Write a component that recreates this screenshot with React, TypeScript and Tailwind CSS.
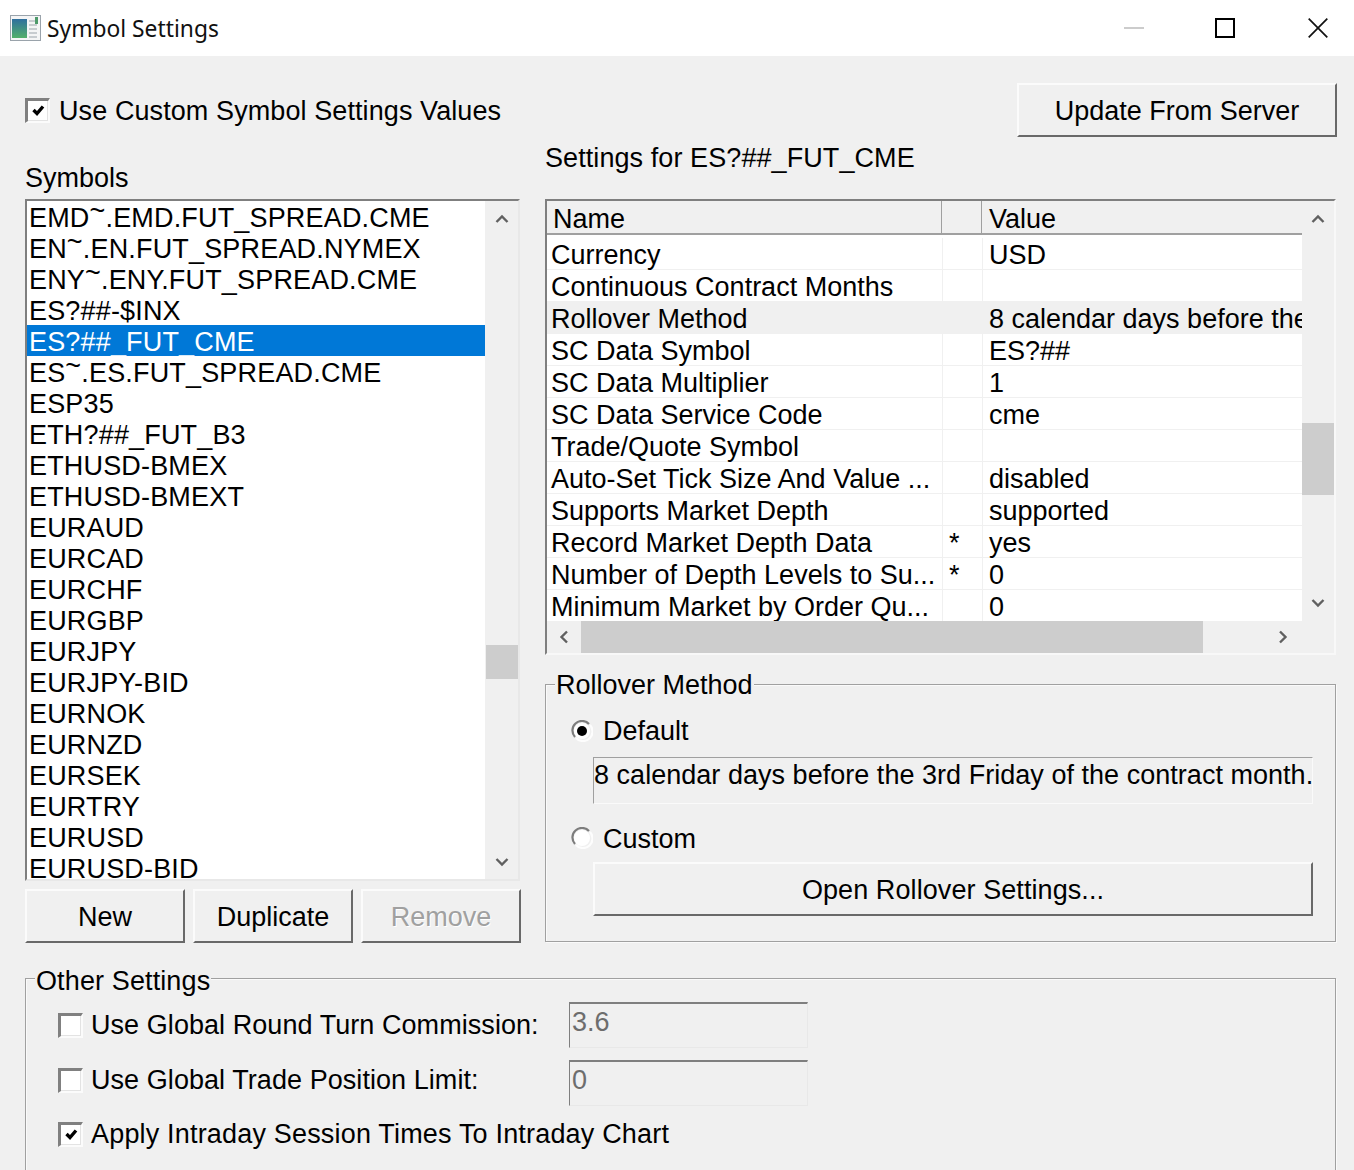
import React from "react";

const symbols = ["EMD~.EMD.FUT_SPREAD.CME","EN~.EN.FUT_SPREAD.NYMEX","ENY~.ENY.FUT_SPREAD.CME","ES?##-$INX","ES?##_FUT_CME","ES~.ES.FUT_SPREAD.CME","ESP35","ETH?##_FUT_B3","ETHUSD-BMEX","ETHUSD-BMEXT","EURAUD","EURCAD","EURCHF","EURGBP","EURJPY","EURJPY-BID","EURNOK","EURNZD","EURSEK","EURTRY","EURUSD","EURUSD-BID"];
const rows: [string, string, string][] = [
  ["Currency","","USD"],
  ["Continuous Contract Months","",""],
  ["Rollover Method","","8 calendar days before the 3rd Friday of the contract month."],
  ["SC Data Symbol","","ES?##"],
  ["SC Data Multiplier","","1"],
  ["SC Data Service Code","","cme"],
  ["Trade/Quote Symbol","",""],
  ["Auto-Set Tick Size And Value ...","","disabled"],
  ["Supports Market Depth","","supported"],
  ["Record Market Depth Data","*","yes"],
  ["Number of Depth Levels to Su...","*","0"],
  ["Minimum Market by Order Qu...","","0"],
];

function Chevron({ dir }: { dir: "up" | "down" | "left" | "right" }) {
  const rot = { up: 0, down: 180, left: 270, right: 90 }[dir];
  return (
    <svg width="14" height="14" viewBox="0 0 14 14" style={{ transform: `rotate(${rot}deg)` }}>
      <path d="M1.5 10 L7 4.5 L12.5 10" fill="none" stroke="#606060" strokeWidth="2.4" />
    </svg>
  );
}

function Check({ checked, className = "" }: { checked?: boolean; className?: string }) {
  return (
    <span className={`flex h-[25px] w-[25px] shrink-0 items-center justify-center border-t-[3px] border-l-[3px] border-r-[2px] border-b-[2px] border-t-[#808080] border-l-[#808080] border-r-[#fbfbfb] border-b-[#fbfbfb] bg-white shadow-[inset_-1px_-1px_0_#e3e3e3] ${className}`}>
      {checked && (
        <svg width="13" height="13" viewBox="0 0 13 13">
          <path d="M1.5 6 L5 9.5 L11 2.5" fill="none" stroke="#000" strokeWidth="3.4" />
        </svg>
      )}
    </span>
  );
}

function Radio({ checked }: { checked?: boolean }) {
  return (
    <svg width="22" height="22" viewBox="0 0 22 22" className="-mt-[2px] shrink-0">
      <circle cx="11" cy="11" r="8" fill="#fff" />
      <path d="M4 17 A9.2 9.2 0 1 1 18 4" fill="none" stroke="#7d7d7d" strokeWidth="2.2" />
      <path d="M19 5 A9.2 9.2 0 0 1 5 18" fill="none" stroke="#fdfdfd" strokeWidth="2.2" />
      {checked && <circle cx="11" cy="11" r="5" fill="#000" />}
    </svg>
  );
}

function Btn({ children, className = "", disabled }: { children: React.ReactNode; className?: string; disabled?: boolean }) {
  return (
    <div className={`flex items-center justify-center border-t-2 border-l-2 border-r-2 border-b-2 border-t-[#fbfbfb] border-l-[#fbfbfb] border-r-[#696969] border-b-[#696969] pt-[2px] ${disabled ? "text-[#a0a0a0] [text-shadow:1px_1px_0_#ffffff]" : "text-black"} ${className}`}>
      {children}
    </div>
  );
}

// The list font draws its tilde high and small in the reference.
function SymbolText({ text }: { text: string }) {
  const i = text.indexOf("~");
  if (i < 0) return <>{text}</>;
  return (
    <>
      {text.slice(0, i)}
      <span className="relative -top-[7px]">~</span>
      {text.slice(i + 1)}
    </>
  );
}

export default function App() {
  return (
    <div
      className="flex h-[1170px] w-[1354px] flex-col overflow-hidden bg-[#f0f0f0] text-[27px] text-black"
      style={{ fontFamily: '"Liberation Sans", Arial, sans-serif' }}
    >
      {/* Title bar */}
      <div className="flex h-[56px] shrink-0 items-center bg-white pl-[10px]">
        <svg width="31" height="26" viewBox="0 0 31 26" className="mb-[1px] shrink-0">
          <rect x="0.5" y="0.5" width="30" height="25" fill="#f4f5f6" stroke="#9aa3ab" />
          <defs>
            <linearGradient id="tg" x1="0" y1="0" x2="0" y2="1">
              <stop offset="0" stopColor="#2f6f9e" />
              <stop offset="1" stopColor="#52b06a" />
            </linearGradient>
          </defs>
          <rect x="2" y="4" width="15" height="19" fill="url(#tg)" />
          <path d="M19 6h8M19 10h8M19 14h8M19 18h8M19 22h8" stroke="#b8bec4" strokeWidth="1.5" />
          <rect x="25" y="2" width="3" height="7" fill="#4d9a6a" />
        </svg>
        <span className="ml-[6px] pt-[2px] text-[22.8px] leading-none text-[#111]" style={{ fontFamily: '"Noto Sans", sans-serif' }}>Symbol Settings</span>
        <div className="ml-auto flex items-center">
          <span className="h-[2px] w-[20px] bg-[#cccccc]" />
          <span className="ml-[71px] h-[20px] w-[20px] border-2 border-black" />
          <svg width="20" height="20" viewBox="0 0 20 20" className="ml-[73px] mr-[26px]">
            <path d="M0.7 0.7 L19.3 19.3 M19.3 0.7 L0.7 19.3" stroke="#111" strokeWidth="1.7" />
          </svg>
        </div>
      </div>

      {/* Body */}
      <div className="flex flex-1 flex-col pl-[25px] pr-[18px]">
        <div className="mt-[27px] flex h-[54px] items-center justify-between">
          <label className="flex items-center">
            <Check checked />
            <span className="ml-[9px] pt-[2px] leading-none tracking-[0.09px]">Use Custom Symbol Settings Values</span>
          </label>
          <Btn className="-mr-[1px] h-[54px] w-[320px]">Update From Server</Btn>
        </div>

        <div className="flex gap-[24px]">
          {/* Left column */}
          <div className="flex w-[496px] flex-col">
            <div className="mt-[25px] h-[37px] leading-[32px]">Symbols</div>
            <div className="flex h-[682px] w-[495px] border-t-2 border-l-2 border-r-2 border-b-2 border-t-[#7f7f7f] border-l-[#7f7f7f] border-r-[#e8e8e8] border-b-[#e8e8e8]">
              <div className="w-[458px] overflow-hidden bg-white">
                {symbols.map((s, i) => (
                  <div key={s} className={`h-[31px] whitespace-nowrap pl-[2px] pt-[4px] leading-[27px] tracking-[0.17px] ${i === 4 ? "bg-[#0078d7] text-white" : ""}`}><SymbolText text={s} /></div>
                ))}
              </div>
              <div className="flex w-[33px] flex-col pl-px">
                <div className="flex h-[36px] items-center justify-center"><Chevron dir="up" /></div>
                <div className="mt-[408px] h-[34px] bg-[#cdcdcd]" />
                <div className="mt-auto flex h-[36px] items-center justify-center pt-[2px]"><Chevron dir="down" /></div>
              </div>
            </div>
            <div className="mt-[8px] flex gap-[8px]">
              <Btn className="h-[54px] w-[160px]">New</Btn>
              <Btn className="h-[54px] w-[160px]">Duplicate</Btn>
              <Btn className="h-[54px] w-[160px]" disabled>Remove</Btn>
            </div>
          </div>

          {/* Right column */}
          <div className="flex w-[791px] flex-col">
            <div className="mt-[5px] h-[57px] leading-[32px] tracking-[0.08px]">Settings for ES?##_FUT_CME</div>
            <div className="h-[456px] border-t-2 border-l-2 border-r-2 border-b-2 border-t-[#7f7f7f] border-l-[#7f7f7f] border-r-[#f8f8f8] border-b-[#f8f8f8]">
              <div className="flex h-[420px]">
                <div className="w-[755px] overflow-hidden">
                  <div className="flex h-[34px] border-b-2 border-b-[#a0a0a0]">
                    <div className="w-[395px] border-r border-r-[#a0a0a0] pl-[6px] pt-[5px] leading-[27px]">Name</div>
                    <div className="w-[40px] border-r border-r-[#a0a0a0]" />
                    <div className="pl-[7px] pt-[5px] leading-[27px]">Value</div>
                  </div>
                  <div className="h-[386px] overflow-hidden bg-white pt-[3px]">
                    {rows.map(([n, m, v], i) => (
                      <div key={n} className={`flex h-[32px] border-b border-b-[#f0f0f0] ${i === 2 ? "bg-[#f0f0f0]" : ""}`}>
                        <div className="w-[396px] shrink-0 whitespace-nowrap border-r border-r-[#f0f0f0] pl-[4px] pt-[4px] leading-[27px]">{n}</div>
                        <div className="w-[40px] shrink-0 border-r border-r-[#f0f0f0] pl-[6px] pt-[4px] leading-[27px]">{m}</div>
                        <div className="whitespace-nowrap pl-[6px] pt-[4px] leading-[27px]">{v}</div>
                      </div>
                    ))}
                  </div>
                </div>
                <div className="flex w-[32px] flex-col">
                  <div className="flex h-[36px] items-center justify-center"><Chevron dir="up" /></div>
                  <div className="mt-[186px] h-[72px] bg-[#cdcdcd]" />
                  <div className="mt-auto flex h-[36px] items-center justify-center"><Chevron dir="down" /></div>
                </div>
              </div>
              <div className="flex h-[32px]">
                <div className="flex w-[34px] items-center justify-center"><Chevron dir="left" /></div>
                <div className="w-[622px] bg-[#cdcdcd]" />
                <div className="w-[64px]" />
                <div className="flex w-[32px] items-center justify-center"><Chevron dir="right" /></div>
              </div>
            </div>

            {/* Rollover group */}
            <div className="relative mt-[29px] h-[258px] border border-[#a0a0a0] pl-[25px] pt-[31px] shadow-[inset_1px_1px_0_#fafafa,1px_1px_0_#fafafa]">
              <span className="absolute -top-[16px] left-[9px] bg-[#f0f0f0] px-px leading-[32px]">Rollover Method</span>
              <div className="flex h-[32px] items-center">
                <Radio checked />
                <span className="ml-[10px] -mt-[2px] leading-none">Default</span>
              </div>
              <div className="ml-[22px] mt-[9px] h-[47px] w-[720px] whitespace-nowrap border-t border-l border-r border-b border-t-[#a0a0a0] border-l-[#a0a0a0] border-r-[#fafafa] border-b-[#fafafa] leading-[34px] tracking-[0.03px]">
                8 calendar days before the 3rd Friday of the contract month.
              </div>
              <div className="mt-[19px] flex h-[32px] items-center">
                <Radio />
                <span className="ml-[10px] leading-none">Custom</span>
              </div>
              <Btn className="ml-[22px] mt-[7px] h-[54px] w-[720px] tracking-[0.08px]">Open Rollover Settings...</Btn>
            </div>
          </div>
        </div>

        {/* Other settings group */}
        <div className="relative mt-[35px] h-[300px] border border-[#a0a0a0] pl-[32px] pt-[23px] shadow-[inset_1px_1px_0_#fafafa,1px_1px_0_#fafafa]">
          <span className="absolute -top-[14px] left-[9px] bg-[#f0f0f0] px-px leading-[32px] tracking-[0.12px]">Other Settings</span>
          <div className="flex h-[47px] items-start">
            <div className="flex h-[46px] w-[511px] items-center">
              <Check />
              <span className="ml-[8px] leading-none tracking-[0.06px]">Use Global Round Turn Commission:</span>
            </div>
            <div className="h-[46px] w-[239px] border-t-2 border-l border-r border-b border-t-[#7f7f7f] border-l-[#7f7f7f] border-r-[#e8e8e8] border-b-[#e8e8e8] pl-[2px] leading-[36px] text-[#6d6d6d]">3.6</div>
          </div>
          <div className="mt-[11px] flex h-[46px] items-start">
            <div className="flex h-[40px] w-[511px] items-center">
              <Check />
              <span className="ml-[8px] leading-none tracking-[0.06px]">Use Global Trade Position Limit:</span>
            </div>
            <div className="h-[46px] w-[239px] border-t-2 border-l border-r border-b border-t-[#7f7f7f] border-l-[#7f7f7f] border-r-[#e8e8e8] border-b-[#e8e8e8] pl-[2px] leading-[36px] text-[#6d6d6d]">0</div>
          </div>
          <div className="mt-[5px] flex h-[46px] items-center">
            <Check checked />
            <span className="ml-[8px] leading-none tracking-[0.18px]">Apply Intraday Session Times To Intraday Chart</span>
          </div>
        </div>
      </div>
    </div>
  );
}
